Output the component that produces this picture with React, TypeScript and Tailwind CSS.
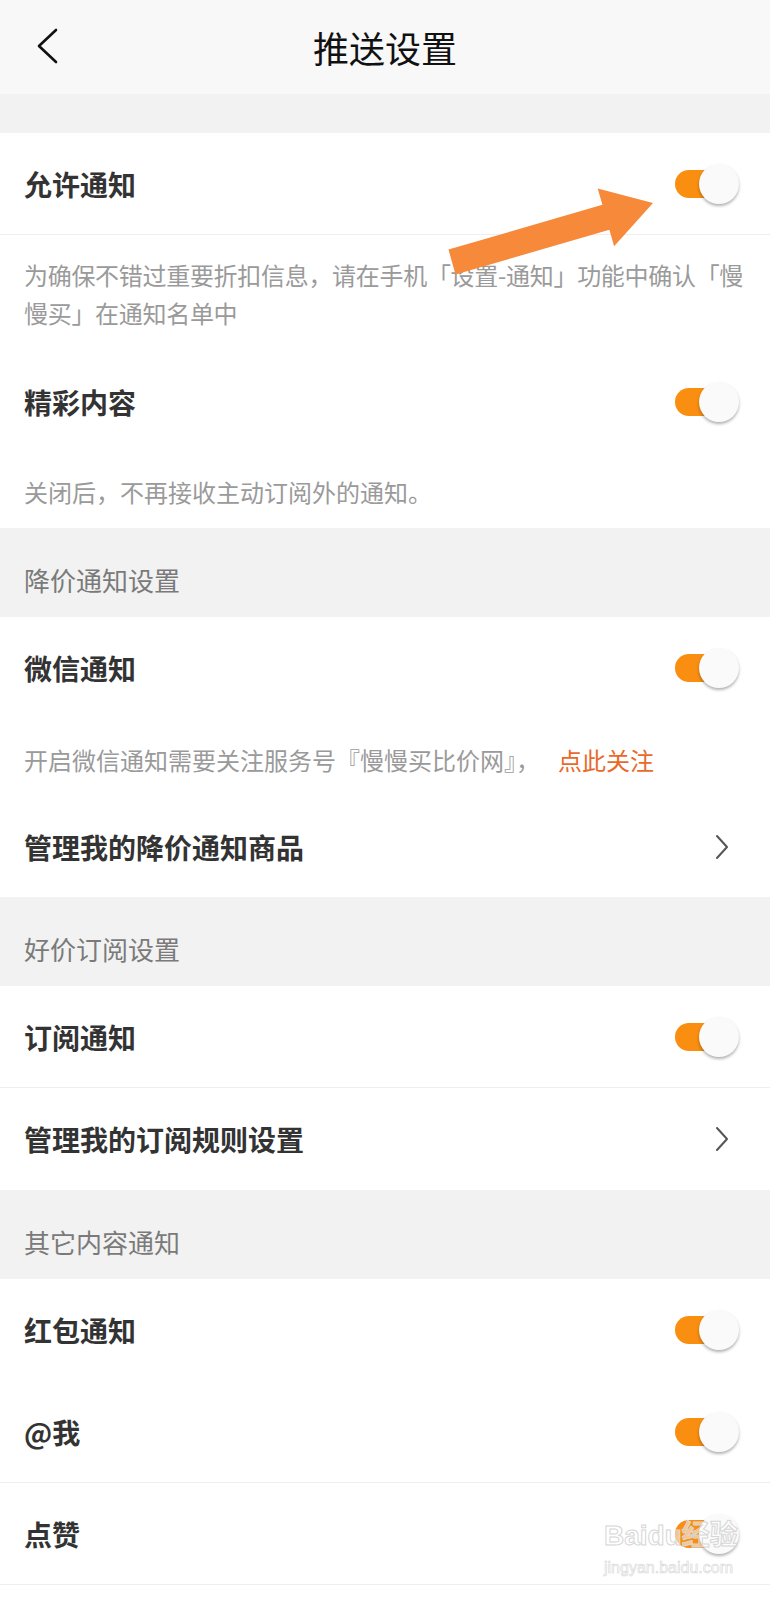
import React from "react";

const FONT = "font-['Noto_Sans_CJK_SC','Noto_Sans',sans-serif]";

function Toggle() {
  return (
    <div className="relative w-[64px] h-[40px] shrink-0">
      <div className="absolute left-0 top-[6px] w-[50px] h-[28px] rounded-full bg-[#f98e10]" />
      <div className="absolute right-0 top-0 w-[40px] h-[40px] rounded-full bg-[#fafafa] shadow-[0_2px_3px_rgba(0,0,0,0.3)]" />
    </div>
  );
}

function Chevron() {
  return (
    <svg width="14" height="26" viewBox="0 0 14 26" className="shrink-0 mr-[10px]">
      <path d="M2 2 L12 13 L2 24" fill="none" stroke="#555" strokeWidth="2" strokeLinecap="round" strokeLinejoin="round" />
    </svg>
  );
}

function Row({ title, chevron, divider, h = "h-[102px]" }: { title: string; chevron?: boolean; divider?: boolean; h?: string }) {
  return (
    <div className={`${h} flex items-center justify-between pl-[24px] pr-[31px] ${divider ? "border-b border-[#eeeeee]" : ""}`}>
      <span className="text-[28px] leading-[40px] font-bold text-[#333333]">{title}</span>
      {chevron ? <Chevron /> : <Toggle />}
    </div>
  );
}

function Section({ title }: { title: string }) {
  return (
    <div className="h-[89px] bg-[#f2f2f2] pl-[24px] pt-[34px]">
      <span className="text-[26px] leading-[36px] text-[#7a7a7a]">{title}</span>
    </div>
  );
}

export default function App() {
  return (
    <div className={`relative w-[770px] min-h-[1600px] bg-white overflow-hidden ${FONT}`}>
      {/* Header */}
      <div className="h-[94px] bg-[#f8f8f8] grid grid-cols-[1fr_auto_1fr] items-center">
        <div className="pl-[36px] flex items-center">
          <svg width="24" height="38" viewBox="0 0 24 38">
            <path d="M20 2 L3 18 L20 34" fill="none" stroke="#111" strokeWidth="2.6" strokeLinecap="round" strokeLinejoin="round" />
          </svg>
        </div>
        <span className="text-[36px] leading-[44px] text-[#111111]">推送设置</span>
        <div />
      </div>
      <div className="h-[39px] bg-[#f2f2f2]" />

      <Row title="允许通知" divider />
      <div className="px-[24px] pt-[21px] pb-[19px] text-[24px] leading-[38px] text-[#9a9a9a] tracking-[-0.3px]">
        <div className="whitespace-nowrap">为确保不错过重要折扣信息，请在手机「设置-通知」功能中确认「慢</div>
        <div className="whitespace-nowrap">慢买」在通知名单中</div>
      </div>
      <Row title="精彩内容" />
      <div className="px-[24px] pt-[20px] pb-[17px] text-[24px] leading-[38px] text-[#9a9a9a]">
        关闭后，不再接收主动订阅外的通知。
      </div>

      <Section title="降价通知设置" />
      <Row title="微信通知" />
      <div className="px-[24px] pt-[22px] pb-[18px] text-[24px] leading-[38px] text-[#9a9a9a] flex whitespace-nowrap">
        <span>开启微信通知需要关注服务号『慢慢买比价网』，</span>
        <span className="ml-[18px] text-[#e8692a]">点此关注</span>
      </div>
      <Row title="管理我的降价通知商品" chevron h="h-[100px]" />

      <Section title="好价订阅设置" />
      <Row title="订阅通知" divider />
      <Row title="管理我的订阅规则设置" chevron />

      <Section title="其它内容通知" />
      <Row title="红包通知" />
      <Row title="@我" divider />
      <Row title="点赞" divider />

      {/* Annotation arrow */}
      <svg className="absolute left-0 top-0 pointer-events-none" width="770" height="300" viewBox="0 0 770 300">
        <polygon
          points="448.5,249.5 602.4,204.8 597.7,188.4 653,203 614.1,246.2 609.4,229.8 455.5,274.5"
          fill="#f7893a"
        />
      </svg>

      {/* Watermark */}
      <div className="absolute left-[604px] top-[1516px] pointer-events-none flex flex-col items-start whitespace-nowrap">
        <span className="text-[28px] leading-[40px] font-bold text-white/50 [-webkit-text-stroke:1px_#d6d6d6] font-['Liberation_Sans','Noto_Sans_CJK_SC',sans-serif]">
          Baidu经验
        </span>
        <span className="text-[16px] leading-[24px] text-white/50 [-webkit-text-stroke:0.6px_#d6d6d6] font-['Liberation_Sans',sans-serif]">
          jingyan.baidu.com
        </span>
      </div>
    </div>
  );
}
